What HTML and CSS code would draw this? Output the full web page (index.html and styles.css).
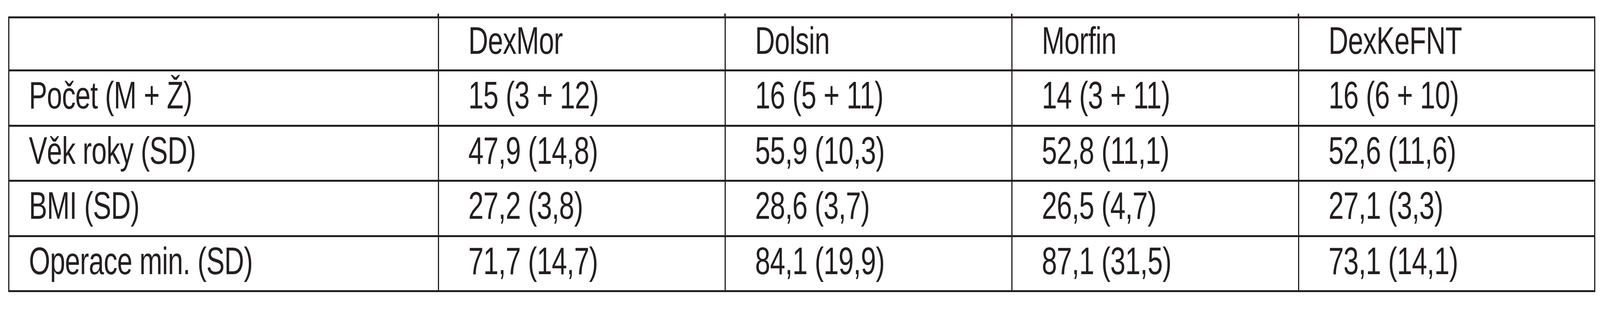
FILE: index.html
```html
<!DOCTYPE html>
<html lang="cs">
<head>
<meta charset="utf-8">
<title>Tabulka</title>
<link rel="stylesheet" href="styles.css">
</head>
<body>
<table class="data">
  <colgroup>
    <col class="c-label">
    <col class="c-val">
    <col class="c-val">
    <col class="c-val">
    <col class="c-last">
  </colgroup>
  <thead>
    <tr class="head">
      <th class="label"></th>
      <th class="tick"><span class="t">DexMor</span></th>
      <th class="tick"><span class="t">Dolsin</span></th>
      <th class="tick"><span class="t">Morfin</span></th>
      <th class="tick"><span class="t">DexKeFNT</span></th>
    </tr>
  </thead>
  <tbody>
    <tr>
      <td class="label"><span class="t">Počet (M + Ž)</span></td>
      <td><span class="t">15 (3 + 12)</span></td>
      <td><span class="t">16 (5 + 11)</span></td>
      <td><span class="t">14 (3 + 11)</span></td>
      <td><span class="t">16 (6 + 10)</span></td>
    </tr>
    <tr>
      <td class="label"><span class="t">Věk roky (SD)</span></td>
      <td><span class="t">47,9 (14,8)</span></td>
      <td><span class="t">55,9 (10,3)</span></td>
      <td><span class="t">52,8 (11,1)</span></td>
      <td><span class="t">52,6 (11,6)</span></td>
    </tr>
    <tr>
      <td class="label"><span class="t">BMI (SD)</span></td>
      <td><span class="t">27,2 (3,8)</span></td>
      <td><span class="t">28,6 (3,7)</span></td>
      <td><span class="t">26,5 (4,7)</span></td>
      <td><span class="t">27,1 (3,3)</span></td>
    </tr>
    <tr>
      <td class="label"><span class="t">Operace min. (SD)</span></td>
      <td><span class="t">71,7 (14,7)</span></td>
      <td><span class="t">84,1 (19,9)</span></td>
      <td><span class="t">87,1 (31,5)</span></td>
      <td><span class="t">73,1 (14,1)</span></td>
    </tr>
  </tbody>
</table>
</body>
</html>
```

FILE: styles.css
```css
:root {
  /* one pixel of the 5778 x 800 reference, per axis */
  --hx: calc(100vw / 5778);
  --vy: calc(100vh / 800);
}

html, body {
  margin: 0;
  padding: 0;
  background: #ffffff;
  overflow: hidden;
}

body {
  font-family: "Liberation Sans", Arial, Helvetica, sans-serif;
  color: #231f20;
}

.data {
  margin: calc(42 * var(--vy)) 0 0 calc(30 * var(--hx));
  border-collapse: separate;
  border-spacing: calc(5 * var(--hx)) calc(5.5 * var(--vy));
  background: #231f20;
  table-layout: fixed;
  width: calc(5706 * var(--hx));
}

.c-label { width: calc(1547 * var(--hx)); }
.c-val { width: calc(1031 * var(--hx)); }
.c-last { width: calc(1066 * var(--hx)); }

.data th,
.data td {
  background: #ffffff;
  font-size: calc(99 * var(--vy));
  font-weight: normal;
  line-height: calc(113 * var(--vy));
  letter-spacing: calc(-1 * var(--vy));
  text-align: left;
  vertical-align: top;
  white-space: nowrap;
  padding: calc(4 * var(--vy)) 0 calc(19.5 * var(--vy)) calc(106 * var(--hx));
}

.data th {
  padding-top: 0;
  padding-bottom: calc(18 * var(--vy));
}

.data .label {
  padding-left: calc(70 * var(--hx));
}

.t {
  display: inline-block;
  transform: scaleX(0.7089);
  transform-origin: left center;
}

.tick {
  position: relative;
}

.tick::before {
  content: "";
  position: absolute;
  left: calc(-5 * var(--hx));
  top: calc(-12.5 * var(--vy));
  width: calc(5 * var(--hx));
  height: calc(7 * var(--vy));
  background: #231f20;
}
```
